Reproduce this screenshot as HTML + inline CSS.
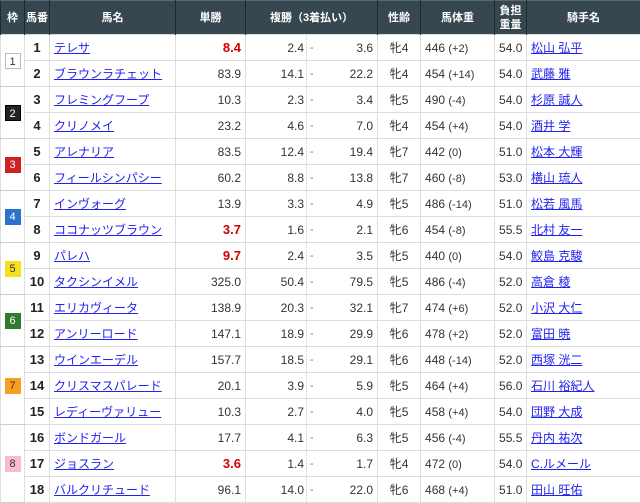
<!DOCTYPE html>
<html><head><meta charset="utf-8">
<style>
html,body{margin:0;padding:0;background:#fff;width:640px;height:503px;overflow:hidden}
table{border-collapse:collapse;table-layout:fixed;width:640px;font-family:"Liberation Sans","Noto Sans CJK JP",sans-serif;font-size:12px;color:#333}
th{background:#37474f;color:#fff;font-weight:bold;font-size:11px;height:33px;border-left:1px solid #1f2a30;border-right:1px solid #1f2a30;border-top:1px solid #5a6a72;padding:0;line-height:14px}
td{height:25px;border:1px solid #ddd;padding:0 4px;white-space:nowrap;overflow:hidden}
td.g{text-align:center;padding:0;border-bottom:1px solid #ccc}
td.n{text-align:center;font-weight:bold;font-size:13px;color:#222}
td.r{text-align:right}
td.c{text-align:center}
td.lo{text-align:right;border-right:none;padding-right:2px}
td.d{border-left:1px dotted #ccc;border-right:none;padding:0;text-align:center;color:#777;font-size:11px}
td.hi{text-align:right;border-left:none}
a{color:#2222ee;text-decoration:underline}
.red{color:#d40000;font-weight:bold;font-size:13px}
.p{font-size:11px}
.b{display:inline-block;width:16px;height:16px;line-height:16px;font-size:11px;text-align:center;box-sizing:border-box}
</style></head><body>
<table>
<colgroup><col style="width:24px"><col style="width:25px"><col style="width:126px"><col style="width:70px"><col style="width:61px"><col style="width:10px"><col style="width:61px"><col style="width:43px"><col style="width:74px"><col style="width:32px"><col style="width:114px"></colgroup>
<tr><th>枠</th><th>馬番</th><th>馬名</th><th>単勝</th><th colspan="3">複勝（3着払い）</th><th>性齢</th><th>馬体重</th><th>負担<br>重量</th><th>騎手名</th></tr>
<tr><td class="g" rowspan="2"><span class="b" style="border:1px solid #bbb;background:#fff;color:#333">1</span></td><td class="n">1</td><td><a>テレサ</a></td><td class="r"><span class="red">8.4</span></td><td class="lo">2.4</td><td class="d">-</td><td class="hi">3.6</td><td class="c">牝4</td><td>446 <span class="p">(+2)</span></td><td class="r">54.0</td><td><a>松山 弘平</a></td></tr>
<tr><td class="n">2</td><td><a>ブラウンラチェット</a></td><td class="r">83.9</td><td class="lo">14.1</td><td class="d">-</td><td class="hi">22.2</td><td class="c">牝4</td><td>454 <span class="p">(+14)</span></td><td class="r">54.0</td><td><a>武藤 雅</a></td></tr>
<tr><td class="g" rowspan="2"><span class="b" style="background:#222;color:#fff;border:1px solid #000">2</span></td><td class="n">3</td><td><a>フレミングフープ</a></td><td class="r">10.3</td><td class="lo">2.3</td><td class="d">-</td><td class="hi">3.4</td><td class="c">牝5</td><td>490 <span class="p">(-4)</span></td><td class="r">54.0</td><td><a>杉原 誠人</a></td></tr>
<tr><td class="n">4</td><td><a>クリノメイ</a></td><td class="r">23.2</td><td class="lo">4.6</td><td class="d">-</td><td class="hi">7.0</td><td class="c">牝4</td><td>454 <span class="p">(+4)</span></td><td class="r">54.0</td><td><a>酒井 学</a></td></tr>
<tr><td class="g" rowspan="2"><span class="b" style="background:#cc2222;color:#fff">3</span></td><td class="n">5</td><td><a>アレナリア</a></td><td class="r">83.5</td><td class="lo">12.4</td><td class="d">-</td><td class="hi">19.4</td><td class="c">牝7</td><td>442 <span class="p">(0)</span></td><td class="r">51.0</td><td><a>松本 大輝</a></td></tr>
<tr><td class="n">6</td><td><a>フィールシンパシー</a></td><td class="r">60.2</td><td class="lo">8.8</td><td class="d">-</td><td class="hi">13.8</td><td class="c">牝7</td><td>460 <span class="p">(-8)</span></td><td class="r">53.0</td><td><a>横山 琉人</a></td></tr>
<tr><td class="g" rowspan="2"><span class="b" style="background:#2a72cc;color:#fff">4</span></td><td class="n">7</td><td><a>インヴォーグ</a></td><td class="r">13.9</td><td class="lo">3.3</td><td class="d">-</td><td class="hi">4.9</td><td class="c">牝5</td><td>486 <span class="p">(-14)</span></td><td class="r">51.0</td><td><a>松若 風馬</a></td></tr>
<tr><td class="n">8</td><td><a>ココナッツブラウン</a></td><td class="r"><span class="red">3.7</span></td><td class="lo">1.6</td><td class="d">-</td><td class="hi">2.1</td><td class="c">牝6</td><td>454 <span class="p">(-8)</span></td><td class="r">55.5</td><td><a>北村 友一</a></td></tr>
<tr><td class="g" rowspan="2"><span class="b" style="background:#f5e020;color:#333">5</span></td><td class="n">9</td><td><a>パレハ</a></td><td class="r"><span class="red">9.7</span></td><td class="lo">2.4</td><td class="d">-</td><td class="hi">3.5</td><td class="c">牝5</td><td>440 <span class="p">(0)</span></td><td class="r">54.0</td><td><a>鮫島 克駿</a></td></tr>
<tr><td class="n">10</td><td><a>タクシンイメル</a></td><td class="r">325.0</td><td class="lo">50.4</td><td class="d">-</td><td class="hi">79.5</td><td class="c">牝5</td><td>486 <span class="p">(-4)</span></td><td class="r">52.0</td><td><a>高倉 稜</a></td></tr>
<tr><td class="g" rowspan="2"><span class="b" style="background:#2f7a2f;color:#fff">6</span></td><td class="n">11</td><td><a>エリカヴィータ</a></td><td class="r">138.9</td><td class="lo">20.3</td><td class="d">-</td><td class="hi">32.1</td><td class="c">牝7</td><td>474 <span class="p">(+6)</span></td><td class="r">52.0</td><td><a>小沢 大仁</a></td></tr>
<tr><td class="n">12</td><td><a>アンリーロード</a></td><td class="r">147.1</td><td class="lo">18.9</td><td class="d">-</td><td class="hi">29.9</td><td class="c">牝6</td><td>478 <span class="p">(+2)</span></td><td class="r">52.0</td><td><a>富田 暁</a></td></tr>
<tr><td class="g" rowspan="3"><span class="b" style="background:#f6a020;color:#333">7</span></td><td class="n">13</td><td><a>ウインエーデル</a></td><td class="r">157.7</td><td class="lo">18.5</td><td class="d">-</td><td class="hi">29.1</td><td class="c">牝6</td><td>448 <span class="p">(-14)</span></td><td class="r">52.0</td><td><a>西塚 洸二</a></td></tr>
<tr><td class="n">14</td><td><a>クリスマスパレード</a></td><td class="r">20.1</td><td class="lo">3.9</td><td class="d">-</td><td class="hi">5.9</td><td class="c">牝5</td><td>464 <span class="p">(+4)</span></td><td class="r">56.0</td><td><a>石川 裕紀人</a></td></tr>
<tr><td class="n">15</td><td><a>レディーヴァリュー</a></td><td class="r">10.3</td><td class="lo">2.7</td><td class="d">-</td><td class="hi">4.0</td><td class="c">牝5</td><td>458 <span class="p">(+4)</span></td><td class="r">54.0</td><td><a>団野 大成</a></td></tr>
<tr><td class="g" rowspan="3"><span class="b" style="background:#f7bcd0;color:#333">8</span></td><td class="n">16</td><td><a>ボンドガール</a></td><td class="r">17.7</td><td class="lo">4.1</td><td class="d">-</td><td class="hi">6.3</td><td class="c">牝5</td><td>456 <span class="p">(-4)</span></td><td class="r">55.5</td><td><a>丹内 祐次</a></td></tr>
<tr><td class="n">17</td><td><a>ジョスラン</a></td><td class="r"><span class="red">3.6</span></td><td class="lo">1.4</td><td class="d">-</td><td class="hi">1.7</td><td class="c">牝4</td><td>472 <span class="p">(0)</span></td><td class="r">54.0</td><td><a>C.ルメール</a></td></tr>
<tr><td class="n">18</td><td><a>バルクリチュード</a></td><td class="r">96.1</td><td class="lo">14.0</td><td class="d">-</td><td class="hi">22.0</td><td class="c">牝6</td><td>468 <span class="p">(+4)</span></td><td class="r">51.0</td><td><a>田山 旺佑</a></td></tr>
</table>
</body></html>
